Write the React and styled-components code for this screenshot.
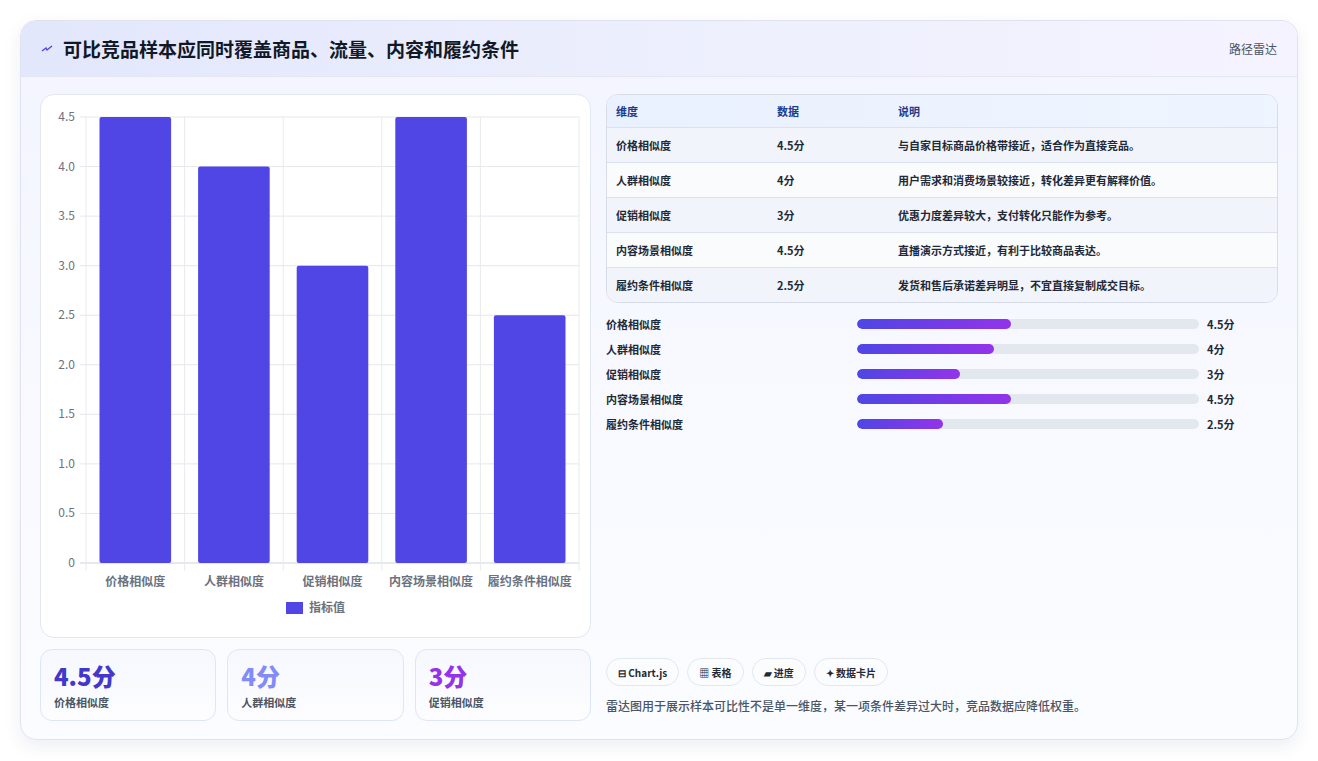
import React from 'react';
import styled, { createGlobalStyle } from 'styled-components';

const ROWS = [
  { name: '价格相似度', value: 4.5, note: '与自家目标商品价格带接近，适合作为直接竞品。' },
  { name: '人群相似度', value: 4, note: '用户需求和消费场景较接近，转化差异更有解释价值。' },
  { name: '促销相似度', value: 3, note: '优惠力度差异较大，支付转化只能作为参考。' },
  { name: '内容场景相似度', value: 4.5, note: '直播演示方式接近，有利于比较商品表达。' },
  { name: '履约条件相似度', value: 2.5, note: '发货和售后承诺差异明显，不宜直接复制成交目标。' },
];

const Global = createGlobalStyle`
  body { margin: 0; background: #fff; font-family: "Noto Sans CJK SC", "Noto Sans", sans-serif; }
`;

const Page = styled.div` padding: 20px 20px 21px 20px; `;

const Card = styled.div`
  border: 1px solid #dfe3f0; border-radius: 16px; overflow: hidden;
  background: linear-gradient(180deg, #f2f4ff 0%, #f9faff 60%, #fbfcff 100%);
  box-shadow: 0 6px 18px rgba(30,40,90,0.08);
`;

const Header = styled.div`
  height: 55px; display: flex; align-items: center; justify-content: space-between;
  padding: 0 20px; background: linear-gradient(90deg, #e3e7fc, #eef0fd 60%, #f5f3ff);
  border-bottom: 1px solid #e4e7f3;
`;

const Title = styled.h1`
  margin: 0; font-size: 19px; font-weight: 700; color: #111827; display: flex; align-items: center; gap: 10px;
`;

const Tag = styled.span` font-size: 12px; color: #4b5563; `;

const Body = styled.div`
  display: grid; grid-template-columns: 551px 1fr; gap: 15px; padding: 17px 19px 18px 19px;
`;

const Col = styled.div` display: flex; flex-direction: column; gap: 11px; `;

const ChartBox = styled.div`
  height: 542px; background: #fff; border: 1px solid #e2e7f1; border-radius: 14px;
`;

const Stats = styled.div` display: grid; grid-template-columns: repeat(3, 1fr); gap: 11px; `;

const Stat = styled.div`
  height: 72px; border: 1px solid #dde6f4; border-radius: 12px; box-sizing: border-box;
  padding: 10px 13px; background: linear-gradient(180deg, #f6f8fe, #fdfdff);
`;

const StatNum = styled.div` font-size: 24px; font-weight: 800; color: ${p => p.c}; line-height: 32px; `;
const StatLabel = styled.div` font-size: 11px; font-weight: 600; color: #4b5563; margin-top: 2px; `;

const Right = styled.div` display: flex; flex-direction: column; `;

const Table = styled.div`
  border: 1px solid #d6dde9; border-radius: 12px; overflow: hidden; background: #fff;
`;

const TRow = styled.div`
  display: grid; grid-template-columns: 161px 121px 1fr; align-items: center; padding-left: 9px;
  height: ${p => p.head ? 32 : 34}px; font-size: 11px; font-weight: 600;
  color: ${p => p.head ? '#1e3a8a' : '#1f2937'};
  background: ${p => p.head ? 'linear-gradient(90deg,#eaf1fe,#eef5ff)' : p.alt ? '#f1f5fb' : '#fafbfd'};
  border-top: ${p => p.first ? 0 : 1}px solid #dbe2ec;
`;

const Bars = styled.div` display: flex; flex-direction: column; gap: 9px; margin-top: 13px; `;
const BarRow = styled.div`
  display: grid; grid-template-columns: 251px 350px 1fr; align-items: center; gap: 0; height: 16px;
  font-size: 11px; font-weight: 600; color: #1f2937;
`;
const Track = styled.div` height: 10px; border-radius: 5px; background: #e3e8ef; margin-right: 8px; overflow: hidden; `;
const Fill = styled.div` height: 100%; border-radius: 5px; background: linear-gradient(90deg, #4f46e5, #9333ea); `;
const BarVal = styled.span` padding-left: 0; `;

const Spacer = styled.div` flex: 1; `;

const Chips = styled.div` display: flex; gap: 8px; `;
const Chip = styled.span`
  height: 28px; box-sizing: border-box; padding: 0 11px; border: 1px solid #e3e7ee; border-radius: 14px;
  background: #fbfcfd; display: inline-flex; align-items: center; gap: 4px;
  font-size: 10px; font-weight: 700; color: #1f2937;
`;
const Note = styled.p` margin: 11px 0 7px 0; font-size: 12px; color: #4b5563; font-weight: 500; `;

function Chart() {
  const top = 22, bottom = 468, left = 45, right = 538;
  const cw = (right - left) / 5;
  const y = v => bottom - (v / 4.5) * (bottom - top);
  const ticks = [0, 0.5, 1, 1.5, 2, 2.5, 3, 3.5, 4, 4.5];
  const font = '"Noto Sans CJK SC", sans-serif';
  return (
    <svg width="551" height="542" viewBox="0 0 551 542">
      {ticks.map(t => (
        <g key={t}>
          <line x1={left - 6} x2={right} y1={y(t)} y2={y(t)} stroke={t === 0 ? '#cdd2dc' : '#e5e7eb'} />
          <text x={left - 11} y={y(t) + 4} textAnchor="end" fontSize="12" fill="#6b7280" fontFamily={font}>{t === 0 ? '0' : t.toFixed(1)}</text>
        </g>
      ))}
      {[0, 1, 2, 3, 4, 5].map(i => (
        <line key={i} x1={left + i * cw} x2={left + i * cw} y1={top} y2={bottom + 8} stroke="#e8eaef" />
      ))}
      {ROWS.map((r, i) => (
        <g key={r.name}>
          <rect x={left + i * cw + 13.5} y={y(r.value)} width={cw - 27} height={bottom - y(r.value)} rx="2" fill="#4f46e5" />
          <text x={left + i * cw + cw / 2} y={bottom + 23} textAnchor="middle" fontSize="12" fontWeight="600" fill="#6b7280" fontFamily={font}>{r.name}</text>
        </g>
      ))}
      <rect x="245" y="507" width="17" height="12" fill="#4f46e5" />
      <text x="268" y="517" fontSize="12" fontWeight="600" fill="#6b7280" fontFamily={font}>指标值</text>
    </svg>
  );
}

export default function App() {
  return (
    <Page>
      <Global />
      <Card>
        <Header>
          <Title>
            <svg width="12" height="10" viewBox="0 0 12 10"><path d="M1 7 L5 4 L6 6 L11 2" stroke="#4f46e5" strokeWidth="1.4" fill="none" /></svg>
            可比竞品样本应同时覆盖商品、流量、内容和履约条件
          </Title>
          <Tag>路径雷达</Tag>
        </Header>
        <Body>
          <Col>
            <ChartBox><Chart /></ChartBox>
            <Stats>
              <Stat><StatNum c="#4338ca">4.5分</StatNum><StatLabel>价格相似度</StatLabel></Stat>
              <Stat><StatNum c="#818cf8">4分</StatNum><StatLabel>人群相似度</StatLabel></Stat>
              <Stat><StatNum c="#9333ea">3分</StatNum><StatLabel>促销相似度</StatLabel></Stat>
            </Stats>
          </Col>
          <Right>
            <Table>
              <TRow head first><span>维度</span><span>数据</span><span>说明</span></TRow>
              {ROWS.map((r, i) => (
                <TRow key={r.name} alt={i % 2 === 0}>
                  <span>{r.name}</span><span>{r.value}分</span><span>{r.note}</span>
                </TRow>
              ))}
            </Table>
            <Bars>
              {ROWS.map(r => (
                <BarRow key={r.name}>
                  <span>{r.name}</span>
                  <Track><Fill style={{ width: `${r.value * 10}%` }} /></Track>
                  <BarVal>{r.value}分</BarVal>
                </BarRow>
              ))}
            </Bars>
            <Spacer />
            <Chips>
              <Chip>⊟ Chart.js</Chip>
              <Chip>▦ 表格</Chip>
              <Chip>▰ 进度</Chip>
              <Chip>✦ 数据卡片</Chip>
            </Chips>
            <Note>雷达图用于展示样本可比性不是单一维度，某一项条件差异过大时，竞品数据应降低权重。</Note>
          </Right>
        </Body>
      </Card>
    </Page>
  );
}
